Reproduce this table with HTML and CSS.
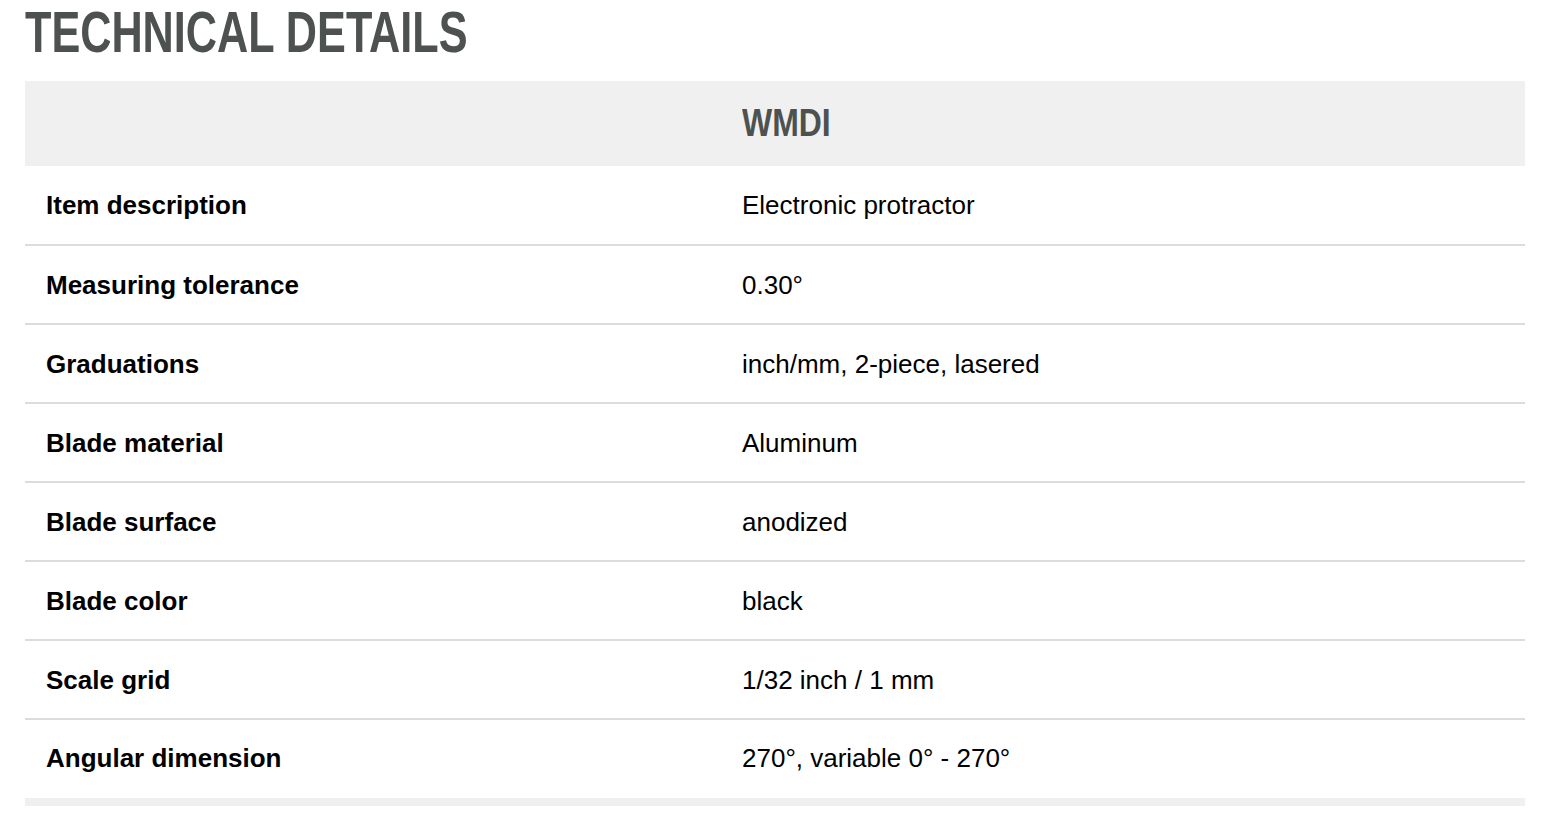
FILE: index.html
```html
<!DOCTYPE html>
<html>
<head>
<meta charset="utf-8">
<link rel="stylesheet" href="styles.css">
</head>
<body>
<section class="tech">
  <h2 class="tech-title"><span class="condensed">TECHNICAL DETAILS</span></h2>
  <div class="tech-wrap">
    <table class="tech-table">
      <thead>
        <tr><th class="col-label"></th><th class="col-value"><span class="condensed-sm">WMDI</span></th></tr>
      </thead>
      <tbody>
        <tr><td class="label">Item description</td><td class="value">Electronic protractor</td></tr>
        <tr><td class="label">Measuring tolerance</td><td class="value">0.30°</td></tr>
        <tr><td class="label">Graduations</td><td class="value">inch/mm, 2-piece, lasered</td></tr>
        <tr><td class="label">Blade material</td><td class="value">Aluminum</td></tr>
        <tr><td class="label">Blade surface</td><td class="value">anodized</td></tr>
        <tr><td class="label">Blade color</td><td class="value">black</td></tr>
        <tr><td class="label">Scale grid</td><td class="value">1/32 inch / 1 mm</td></tr>
        <tr><td class="label">Angular dimension</td><td class="value">270°, variable 0° - 270°</td></tr>
      </tbody>
    </table>
  </div>
</section>
</body>
</html>
```
FILE: styles.css
```css
html, body {
  margin: 0;
  padding: 0;
  background: #fff;
}
.tech {
  padding: 0 24px 0 25px;
  font-family: "Liberation Sans", Arial, sans-serif;
}
.tech-title {
  margin: 0;
  height: 81px;
  font-family: "Liberation Sans", Arial, sans-serif;
  font-weight: bold;
  font-size: 58px;
  line-height: 64px;
  color: #4d5150;
  white-space: nowrap;
}
.condensed {
  display: inline-block;
  transform: scaleX(0.745);
  transform-origin: left center;
}
.condensed-sm {
  display: inline-block;
  transform: scaleX(0.84);
  transform-origin: left center;
}
.tech-wrap {
  width: 1500px;
  border-bottom: 8px solid #f0f0f0;
}
.tech-table {
  width: 1500px;
  border-collapse: collapse;
}
.tech-table thead tr {
  background: #f0f0f0;
  height: 85px;
}
.tech-table th {
  text-align: left;
  padding: 0 0 0 21px;
  font-family: "Liberation Sans", Arial, sans-serif;
  font-weight: bold;
  font-size: 38px;
  color: #4d5150;
  vertical-align: middle;
}
.col-label {
  width: 675px;
}
.tech-table tbody tr {
  height: 79px;
  border-bottom: 2px solid #dcdcdc;
}
.tech-table tbody tr:last-child {
  border-bottom: none;
  height: 79px;
}
.tech-table td {
  padding: 1px 0 0 21px;
  font-size: 26px;
  color: #000;
  vertical-align: middle;
}
.tech-table tbody tr:last-child td {
  padding: 0 0 2px 21px;
}
.tech-table td.label {
  font-weight: bold;
}
```
